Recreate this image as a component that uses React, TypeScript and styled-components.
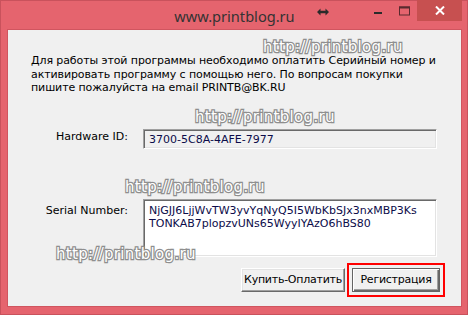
import React from "react";
import styled, { createGlobalStyle, css } from "styled-components";

const GlobalStyle = createGlobalStyle`
  html, body { margin: 0; padding: 0; width: 468px; height: 315px; overflow: hidden; }
  #root { width: 468px; height: 315px; }
  * { box-sizing: border-box; }
`;

const Window = styled.div`
  position: relative;
  width: 468px;
  height: 315px;
  background: #e5646e;
  border: 1px solid #c9525c;
  display: flex;
  flex-direction: column;
  padding: 0 5px 7px 6px;
  font-family: "DejaVu Sans", "Liberation Sans", sans-serif;
`;

const TitleBar = styled.div`
  height: 28px;
  display: grid;
  grid-template-columns: 1fr auto 1fr;
  align-items: start;
`;

const Title = styled.div`
  grid-column: 2;
  font-family: "Noto Sans", "Open Sans", sans-serif;
  font-size: 14.6px;
  line-height: 20px;
  margin-top: 5px;
  color: #333;
`;

const Controls = styled.div`
  grid-column: 3;
  justify-self: end;
  display: flex;
  margin-top: -1px;
`;

const CtlButton = styled.div<{ $w: number; $close?: boolean }>`
  width: ${(p) => p.$w}px;
  height: 21px;
  display: flex;
  align-items: center;
  justify-content: center;
  ${(p) =>
    p.$close &&
    css`
      background: #c75050;
    `}
`;

const Cursor = styled.svg`
  position: absolute;
  left: 316px;
  top: 7px;
`;

const Client = styled.div`
  flex: 1;
  background: #f0f0f0;
  border: 1px solid #d0555f;
  display: flex;
  flex-direction: column;
  color: #000;
  font-size: 11px;
`;

const Message = styled.p`
  margin: 0;
  padding: 24px 0 0 23px;
  line-height: 13.5px;
  letter-spacing: -0.1px;
  white-space: nowrap;
`;

const Form = styled.div`
  display: grid;
  grid-template-columns: 100px 294px;
  column-gap: 15px;
  row-gap: 50px;
  padding-left: 20px;
  margin-top: 34px;
`;

const Label = styled.div<{ $offset: number }>`
  text-align: right;
  line-height: 14px;
  padding-top: ${(p) => p.$offset}px;
`;

const Field = styled.div<{ $h: number; $white?: boolean }>`
  height: ${(p) => p.$h}px;
  background: ${(p) => (p.$white ? "#fff" : "#f0f0f0")};
  border-top: 1px solid #a0a0a0;
  border-left: 1px solid #a0a0a0;
  border-right: 1px solid #fff;
  border-bottom: 1px solid #fff;
  box-shadow: inset 1px 1px 0 #696969, inset -1px -1px 0 #e3e3e3;
  color: #0c0c4a;
  padding: ${(p) => (p.$white ? "4px 4px 0 5px" : "3px 4px 0 5px")};
  line-height: 13px;
  white-space: pre;
`;

const ButtonRow = styled.div`
  display: flex;
  justify-content: flex-end;
  gap: 7px;
  margin-top: 11px;
  padding-right: 21px;
`;

const Button = styled.div<{ $w: number; $default?: boolean }>`
  width: ${(p) => p.$w}px;
  height: 24px;
  background: #f0f0f0;
  display: flex;
  align-items: center;
  justify-content: center;
  line-height: 14px;
  white-space: nowrap;
  letter-spacing: -0.25px;
  border-top: 1px solid #fff;
  border-left: 1px solid #fff;
  border-right: 1px solid #696969;
  border-bottom: 1px solid #696969;
  box-shadow: inset -1px -1px 0 #a0a0a0, inset 1px 1px 0 #e3e3e3;
  ${(p) =>
    p.$default &&
    css`
      border: 1px solid #646464;
      box-shadow: inset 1px 1px 0 #fff, inset -1px -1px 0 #696969, inset -2px -2px 0 #a0a0a0;
      outline: 2px solid #ff0000;
      outline-offset: 3px;
    `}
`;

const Watermark = styled.div<{ $x: number; $y: number }>`
  position: absolute;
  left: ${(p) => p.$x}px;
  top: ${(p) => p.$y}px;
  font-family: "DejaVu Sans", sans-serif;
  font-size: 15px;
  line-height: 13px;
  letter-spacing: 0.3px;
  color: #fff;
  -webkit-text-stroke: 2.4px #8e8e8e;
  paint-order: stroke fill;
  pointer-events: none;
  white-space: nowrap;
`;

const marks = [
  { x: 262, y: 40 },
  { x: 194, y: 110 },
  { x: 124, y: 180 },
  { x: 55, y: 247 },
];

export default function App() {
  return (
    <>
      <GlobalStyle />
      <Window>
        <TitleBar>
          <Title>www.printblog.ru</Title>
          <Controls>
            <CtlButton $w={26}>
              <svg width="10" height="10" viewBox="0 0 10 10">
                <rect x="1" y="6" width="8" height="2" fill="#2b2b2b" />
              </svg>
            </CtlButton>
            <CtlButton $w={26}>
              <svg width="11" height="10" viewBox="0 0 11 10">
                <rect x="0.5" y="1" width="10" height="8" fill="none" stroke="#5a2a2e" strokeWidth="1" />
                <rect x="0" y="0.5" width="11" height="2" fill="#5a2a2e" />
              </svg>
            </CtlButton>
            <CtlButton $w={45} $close>
              <svg width="10" height="9" viewBox="0 0 10 9">
                <path d="M1 0.5 L9 8.5 M9 0.5 L1 8.5" stroke="#fff" strokeWidth="2" />
              </svg>
            </CtlButton>
          </Controls>
        </TitleBar>
        <Cursor width="12" height="8" viewBox="0 0 12 8">
          <path d="M0 4 L3.5 0.5 L3.5 2.8 L8.5 2.8 L8.5 0.5 L12 4 L8.5 7.5 L8.5 5.2 L3.5 5.2 L3.5 7.5 Z" fill="#2a2a2a" />
        </Cursor>
        <Client>
          <Message>
            Для работы этой программы необходимо оплатить Серийный номер и
            <br />
            активировать программу с помощью него. По вопросам покупки
            <br />
            пишите пожалуйста на email PRINTB@BK.RU
          </Message>
          <Form>
            <Label $offset={1}>Hardware ID:</Label>
            <Field $h={20}>3700-5C8A-4AFE-7977</Field>
            <Label $offset={5}>Serial Number:</Label>
            <Field $h={58} $white>
              {"NjGJJ6LjjWvTW3yvYqNyQ5I5WbKbSJx3nxMBP3Ks\nTONKAB7plopzvUNs65WyyIYAzO6hBS80"}
            </Field>
          </Form>
          <ButtonRow>
            <Button $w={104}>Купить-Оплатить</Button>
            <Button $w={88} $default>
              Регистрация
            </Button>
          </ButtonRow>
        </Client>
        {marks.map((m, i) => (
          <Watermark key={i} $x={m.x} $y={m.y}>
            http://printblog.ru
          </Watermark>
        ))}
      </Window>
    </>
  );
}
